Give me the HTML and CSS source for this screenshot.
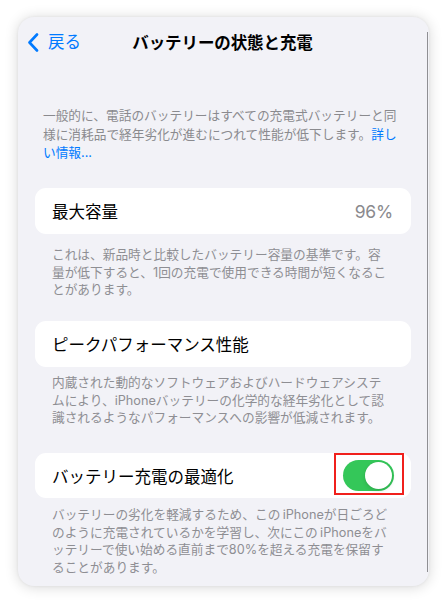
FILE: index.html
```html
<!DOCTYPE html>
<html lang="ja">
<head>
<meta charset="utf-8">
<title>バッテリーの状態と充電</title>
<link rel="stylesheet" href="styles.css">
</head>
<body>
<div class="panel">
  <div class="nav">
    <div class="back">
      <svg class="chev" width="12" height="19" viewBox="0 0 12 19"><path d="M10 1.5 L2.5 9.5 L10 17.5" fill="none" stroke="#007aff" stroke-width="2.6" stroke-linecap="round" stroke-linejoin="round"/></svg>
      <span class="back-label">戻る</span>
    </div>
    <div class="title">バッテリーの状態と充電</div>
  </div>

  <p class="intro">一般的に、電話のバッテリーはすべての充電式バッテリーと同<br>様に消耗品で経年劣化が進むにつれて性能が低下します。<span class="link">詳し<br>い情報...</span></p>

  <div class="card card-1">
    <span class="label">最大容量</span>
    <span class="value">96%</span>
  </div>
  <p class="foot foot-1">これは、新品時と比較したバッテリー容量の基準です。容<br>量が低下すると、1回の充電で使用できる時間が短くなるこ<br>とがあります。</p>

  <div class="card card-2">
    <span class="label">ピークパフォーマンス性能</span>
  </div>
  <p class="foot foot-2">内蔵された動的なソフトウェアおよびハードウェアシステ<br>ムにより、iPhoneバッテリーの化学的な経年劣化として認<br>識されるようなパフォーマンスへの影響が低減されます。</p>

  <div class="card card-3">
    <span class="label">バッテリー充電の最適化</span>
    <div class="toggle-wrap">
      <div class="toggle"><div class="knob"></div></div>
    </div>
  </div>
  <p class="foot foot-3">バッテリーの劣化を軽減するため、この&thinsp;iPhoneが日ごろど<br>のように充電されているかを学習し、次にこの&thinsp;iPhoneをバ<br>ッテリーで使い始める直前まで80%を超える充電を保留す<br>ることがあります。</p>
</div>
</body>
</html>
```

FILE: styles.css
```css
* { box-sizing: border-box; }
html, body {
  margin: 0;
  padding: 0;
  background: #ffffff;
}
body {
  width: 448px;
  height: 604px;
  overflow: hidden;
  font-family: Inter, "Noto Sans CJK JP", "Noto Sans", sans-serif;
  padding-top: 17px;
}
.panel {
  position: relative;
  margin-left: 18px;
  width: 411px;
  height: 569px;
  background: #f2f2f7;
  border-radius: 16px;
  box-shadow: 0 1px 14px rgba(0, 0, 0, 0.16), 0 0 3px rgba(0, 0, 0, 0.06);
  padding: 0 18px 10px 17px;
  overflow: hidden;
}
.panel::after {
  content: "";
  position: absolute;
  right: 1px;
  top: 15px;
  bottom: 14px;
  width: 1px;
  background: #8f8f93;
}
.nav {
  position: relative;
  height: 50px;
  display: flex;
  align-items: center;
  justify-content: center;
}
.back {
  position: absolute;
  left: -8px;
  top: 0;
  height: 50px;
  display: flex;
  align-items: center;
  gap: 9px;
  color: #007aff;
}
.chev { display: block; }
.back-label {
  font-size: 16.5px;
  line-height: 20px;
}
.title {
  font-size: 16.5px;
  font-weight: 700;
  color: #000;
  letter-spacing: -0.1px;
  margin-left: -1px;
}
.intro {
  margin: 40px 0 0 8px;
  font-size: 12.7px;
  line-height: 18.5px;
  color: #8a8a8e;
  white-space: nowrap;
}
.link { color: #007aff; }
.card {
  background: #ffffff;
  border-radius: 11px;
  height: 46px;
  display: flex;
  align-items: center;
  justify-content: space-between;
  padding: 0 18px 0 17px;
}
.card-1 { margin-top: 25.5px; }
.card-2 { margin-top: 22.5px; }
.card-3 { margin-top: 26.5px; height: 45px; }
.label {
  font-size: 16.5px;
  color: #000;
}
.value {
  font-size: 17.5px;
  color: #8a8a8e;
  letter-spacing: -0.2px;
}
.foot {
  margin: 0;
  padding-left: 17px;
  font-size: 12.7px;
  line-height: 17.5px;
  color: #8e8e93;
  white-space: nowrap;
}
.foot-1 { padding-top: 12px; }
.foot-2 { padding-top: 7px; }
.foot-3 { padding-top: 8px; }
.toggle-wrap {
  position: relative;
  margin-right: -1px;
}
.toggle-wrap::after {
  content: "";
  position: absolute;
  left: -9px;
  right: -10px;
  top: -7px;
  bottom: -4px;
  border: 2.5px solid #f0201c;
}
.toggle {
  width: 51px;
  height: 31px;
  border-radius: 16px;
  background: #34c759;
  position: relative;
}
.knob {
  position: absolute;
  right: 2px;
  top: 2px;
  width: 27px;
  height: 27px;
  border-radius: 50%;
  background: #fff;
  box-shadow: 0 0 0 0.5px rgba(0,0,0,0.04), 0 2px 4px rgba(0,0,0,0.12);
}
```
